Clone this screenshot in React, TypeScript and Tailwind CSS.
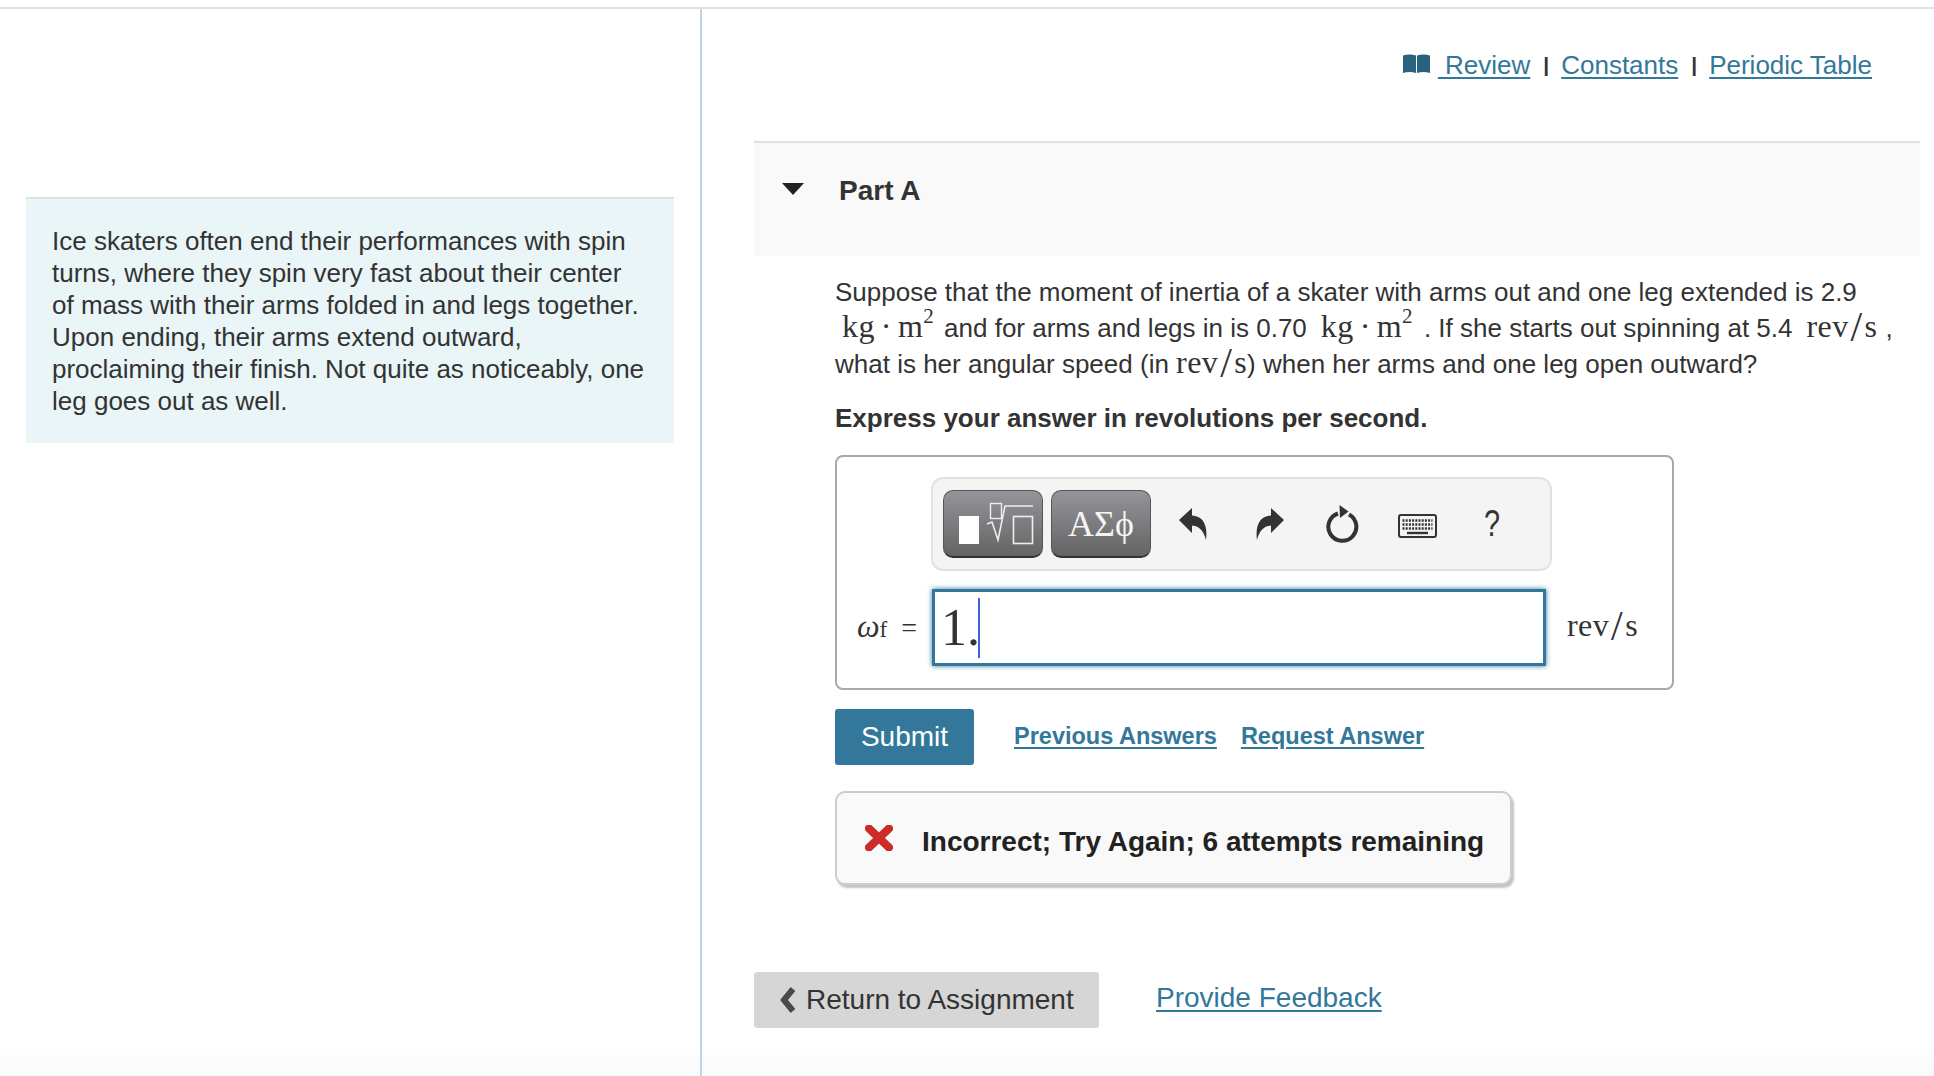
import React from "react";

const serif = "font-['Liberation_Serif','DejaVu_Serif',serif]";

function Unit({ children }: { children: React.ReactNode }) {
  return <span className={`${serif} text-[32px] leading-[0] tracking-[0.4px]`}>{children}</span>;
}

function KgM2() {
  return (
    <Unit>
      kg<span className="mx-[6px]">·</span>m<sup className="text-[21px] leading-[0] relative top-[-14px] align-baseline">2</sup>
    </Unit>
  );
}

function Slash() {
  return <span className="font-light text-[42px] leading-[0] align-[-4px] mx-[2px]">/</span>;
}

function Book() {
  return (
    <svg width="27" height="20" viewBox="0 0 27 20" className="mr-[8px] relative top-[5px]">
      <path d="M0 1.5 C4 0 9 0 13 1.5 V19 C9 17.5 4 17.5 0 19 Z" fill="#27637c" />
      <path d="M14 1.5 C18 0 23 0 27 1.5 V19 C23 17.5 18 17.5 14 19 Z" fill="#27637c" />
    </svg>
  );
}

function TemplatesIcon() {
  return (
    <svg width="98" height="65" viewBox="1 1 98 65" fill="none" stroke="#eeeeee">
      <rect x="16" y="26" width="20" height="28" fill="#ffffff" stroke="none" />
      <rect x="47.5" y="13.5" width="11" height="15" strokeWidth="1.4" />
      <path d="M44 34 L49 32 L55 50 L62 16 H90" strokeWidth="1.6" />
      <rect x="70.5" y="26.5" width="19" height="27" strokeWidth="1.6" />
    </svg>
  );
}

function Undo({ flip }: { flip?: boolean }) {
  return (
    <svg width="28" height="32" viewBox="0 0 28 32" className={flip ? "-scale-x-100" : ""}>
      <path d="M0 12 L13 0 V7.5 C24 8 29 17 27 32 C25 24 21 18 13 17.5 V25 Z" fill="#333333" />
    </svg>
  );
}

function Refresh() {
  return (
    <svg width="34" height="38" viewBox="0 0 34 38" fill="none">
      <path d="M12 8.5 A14 14 0 1 0 23 9.5" stroke="#333333" strokeWidth="4" />
      <path d="M13.5 0 L22.5 6.5 L14 13 Z" fill="#333333" />
    </svg>
  );
}

function KeyboardIcon() {
  return (
    <svg width="39" height="24" viewBox="0 0 39 24" fill="none">
      <rect x="1" y="1" width="37" height="22" rx="2" stroke="#333333" strokeWidth="2" fill="#f4f4f4" />
      <path d="M4.5 6.5 H34.5 M4.5 10.5 H34.5 M4.5 14.5 H34.5" stroke="#333333" strokeWidth="2.4" strokeDasharray="2 1.2" />
      <path d="M9 19 H30" stroke="#333333" strokeWidth="2.4" />
    </svg>
  );
}

const toolbarBtn =
  "h-[68px] w-[100px] rounded-[10px] border border-[#555555] border-b-[2px] border-b-[#333333] bg-gradient-to-b from-[#96949b] to-[#646464] flex items-center justify-center";

export default function App() {
  return (
    <div className="min-h-[1076px] bg-gradient-to-b from-white from-[97%] to-[#fafafa] font-['Liberation_Sans',Arial,sans-serif] text-[#333333] pt-[7px]">
      <div className="border-t-2 border-[#e2e2e2] flex min-h-[1069px]">
        <aside className="w-[702px] shrink-0 border-r-2 border-[#c3d3e2] pl-[26px] pr-[26px] pt-[188px]">
          <div className="w-[648px] h-[246px] border-t-[2px] border-[#dfe0e3] bg-[#e9f5f7] px-[26px] pt-[26px] text-[26px] leading-[32px] whitespace-nowrap">
            Ice skaters often end their performances with spin
            <br />
            turns, where they spin very fast about their center
            <br />
            of mass with their arms folded in and legs together.
            <br />
            Upon ending, their arms extend outward,
            <br />
            proclaiming their finish. Not quite as noticeably, one
            <br />
            leg goes out as well.
          </div>
        </aside>

        <main className="flex-1 pl-[52px] pr-[14px]">
          <nav className="h-[132px] pt-[40px] pr-[48px] flex justify-end items-start text-[26px] leading-[32px]">
            <Book />
            <a className="text-[#33789a] underline underline-offset-[3px]">&nbsp;Review</a>
            <span className="ml-[13px] mr-[12px] text-[21px] font-bold">|</span>
            <a className="text-[#33789a] underline underline-offset-[3px]">Constants</a>
            <span className="ml-[13px] mr-[12px] text-[21px] font-bold">|</span>
            <a className="text-[#33789a] underline underline-offset-[3px]">Periodic Table</a>
          </nav>

          <section className="h-[115px] border-t-2 border-[#e0e0e0] bg-[#f9f9f9] pl-[28px] pt-[32px] flex items-start">
            <svg width="22" height="12" viewBox="0 0 22 12" className="mt-[8px]">
              <path d="M0 0 H22 L11 12 Z" fill="#222222" />
            </svg>
            <h2 className="ml-[35px] text-[28px] leading-[32px] font-bold text-[#333333]">Part A</h2>
          </section>

          <div className="pl-[81px]">
            <p className="mt-[18px] text-[26px] leading-[36px] whitespace-nowrap">
              Suppose that the moment of inertia of a skater with arms out and one leg extended is 2.9
              <br />
              <span className="ml-[7px]"><KgM2 /></span>
              <span className="ml-[10px]">and for arms and legs in is 0.70</span>
              <span className="ml-[14px]"><KgM2 /></span>
              <span className="ml-[11px]">. If she starts out spinning at 5.4</span>
              <span className="ml-[14px]"><Unit>rev<Slash />s</Unit></span>
              <span className="ml-[8px]">,</span>
              <br />
              what is her angular speed (in <Unit>rev<Slash />s</Unit>) when her arms and one leg open outward?
            </p>
            <p className="mt-[18px] text-[26px] leading-[36px] font-bold">Express your answer in revolutions per second.</p>

            <div className="mt-[19px] w-[839px] h-[235px] rounded-[8px] border-2 border-[#a8a8a8] pl-[94px] pt-[20px]">
              <div className="w-[621px] h-[94px] rounded-[12px] border-2 border-[#e2e2e2] bg-[#f4f4f4] pl-[10px] flex items-center">
                <div className={toolbarBtn}>
                  <TemplatesIcon />
                </div>
                <div className={`${toolbarBtn} ml-[8px] text-[#f4f4f4] text-[36px] ${serif}`}>ΑΣϕ</div>
                <div className="ml-[28px]"><Undo /></div>
                <div className="ml-[49px]"><Undo flip /></div>
                <div className="ml-[42px]"><Refresh /></div>
                <div className="ml-[38px] mt-[4px]"><KeyboardIcon /></div>
                <div className="ml-[45px] text-[36px] leading-none text-[#333333] scale-x-[0.8]">?</div>
              </div>

              <div className="mt-[18px] flex items-center relative">
                <div className={`absolute left-[-74px] top-[21px] text-[28px] leading-[32px] ${serif} whitespace-nowrap flex items-baseline`}>
                  <i className="text-[32px]">ω</i><span className="text-[23px]">f</span>
                  <span className="ml-[14px]">=</span>
                </div>
                <div className="w-[614px] h-[77px] ml-[1px] border-[3px] border-[#33789a] shadow-[0_0_5px_#33789a] bg-white flex items-center pl-[6px]">
                  <span className={`${serif} text-[52px] leading-none`}>1.</span>
                  <span className="w-[2px] h-[60px] bg-[#3c63d8] ml-[-2px]" />
                </div>
                <div className="ml-[21px] leading-[0]"><Unit>rev<Slash />s</Unit></div>
              </div>
            </div>

            <div className="mt-[19px] flex items-center">
              <button className="w-[139px] h-[56px] rounded-[3px] bg-[#33789a] text-white text-[28px]">Submit</button>
              <a className="ml-[40px] text-[23.5px] font-bold text-[#33789a] underline underline-offset-[3px]">Previous Answers</a>
              <a className="ml-[24px] text-[23.5px] font-bold text-[#33789a] underline underline-offset-[3px]">Request Answer</a>
            </div>

            <div className="mt-[26px] w-[677px] h-[94px] rounded-[10px] border-2 border-[#cccccc] bg-[#f9f9f9] shadow-[2px_3px_2px_#c4c4c4] flex items-center pl-[28px]">
              <svg width="28" height="26" viewBox="0 0 28 26">
                <path d="M4 3.5 L24 22.5 M24 3.5 L4 22.5" stroke="#cd2a2a" strokeWidth="8" strokeLinecap="round" />
              </svg>
              <span className="ml-[29px] mt-[7px] text-[28px] font-bold text-[#222222] whitespace-nowrap">Incorrect; Try Again; 6 attempts remaining</span>
            </div>
          </div>

          <div className="mt-[87px] flex items-start">
            <button className="w-[345px] h-[56px] rounded-[3px] bg-[#d6d6d6] text-[28px] text-[#333333] flex items-center pl-[26px]">
              <svg width="16" height="26" viewBox="0 0 16 26" className="mr-[10px]">
                <path d="M13 2 L4 13 L13 24" fill="none" stroke="#4a4a4a" strokeWidth="6" />
              </svg>
              Return to Assignment
            </button>
            <a className="ml-[57px] mt-[8px] text-[28px] leading-[36px] text-[#33789a] underline underline-offset-[3px]">Provide Feedback</a>
          </div>
        </main>
      </div>
    </div>
  );
}
